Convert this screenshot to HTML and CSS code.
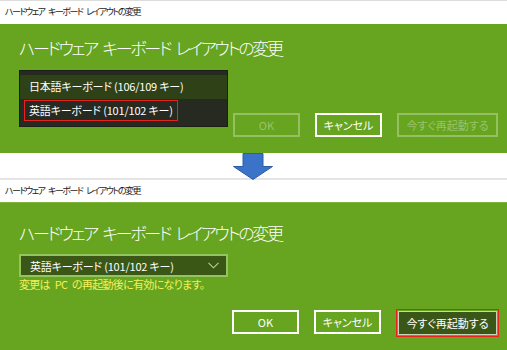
FILE: index.html
```html
<!DOCTYPE html>
<html lang="ja">

<head>
    <meta charset="UTF-8">
    <title>キーボード レイアウトの変更</title>
    <link rel="stylesheet" href="styles.css">
</head>

<body>
    <!-- before: dropdown opened -->
    <div class="titlebar">ハードウェア キーボード レイアウトの変更</div>
    <div class="panel panel--top">
        <h1 class="panel__title">ハードウェア キーボード レイアウトの変更</h1>
        <ul class="list">
            <li class="list__item list__item--hover">日本語キーボード (106/109 キー)</li>
            <li class="list__item"><span class="mark">英語キーボード (101/102 キー)</span></li>
        </ul>
        <div class="actions">
            <button class="btn btn--off">OK</button>
            <button class="btn">キャンセル</button>
            <button class="btn btn--wide btn--off">今すぐ再起動する</button>
        </div>
    </div>

    <div class="arrow-row">
        <svg width="42" height="27" viewBox="0 0 42 27">
            <path d="M11 0.5 H31 V13.5 H40.5 L21 26.5 L1.5 13.5 H11 Z" fill="#3b73c8" stroke="#2d5ea8" stroke-width="1" />
        </svg>
    </div>

    <!-- after: layout chosen -->
    <div class="titlebar titlebar--second">ハードウェア キーボード レイアウトの変更</div>
    <div class="panel panel--bottom">
        <h1 class="panel__title">ハードウェア キーボード レイアウトの変更</h1>
        <div class="select">
            <span>英語キーボード (101/102 キー)</span>
            <svg class="select__chevron" width="11" height="7" viewBox="0 0 11 7">
                <path d="M0.5 0.8 L5.5 5.8 L10.5 0.8" fill="none" stroke="#b9d394" stroke-width="1.1" />
            </svg>
        </div>
        <p class="note">変更は PC の再起動後に有効になります。</p>
        <div class="actions">
            <button class="btn">OK</button>
            <button class="btn">キャンセル</button>
            <span class="mark-box"><button class="btn btn--wide btn--active">今すぐ再起動する</button></span>
        </div>
    </div>
</body>

</html>
```

FILE: styles.css
```css
*,
*::before,
*::after {
    box-sizing: border-box;
}

body {
    margin: 0;
    width: 507px;
    height: 350px;
    overflow: hidden;
    background: #fff;
    font-family: "Noto Sans CJK JP", "Noto Sans", sans-serif;
    font-feature-settings: "palt";
    color: #fff;
}

/* window title */
.titlebar {
    height: 24px;
    padding-left: 5px;
    border-top: 1px solid #dcdcdc;
    background: #fff;
    color: #1a1a1a;
    font-size: 9px;
    line-height: 22px;
    letter-spacing: -1.5px;
    word-spacing: 3px;
}

.titlebar--second {
    height: 23px;
    border-top-color: #e6e6e6;
}

/* green dialog */
.panel {
    position: relative;
    display: flex;
    flex-direction: column;
    background: #67a41f;
    padding: 0 9px 0 19px;
}

.panel--top {
    height: 129px;
    padding-top: 12px;
    padding-bottom: 16px;
}

.panel--bottom {
    height: 148px;
    padding-top: 18px;
    padding-bottom: 16px;
    border-top: 1px solid #7cb43c;
}

.panel__title {
    margin: 0;
    font-size: 17px;
    line-height: 24px;
    font-weight: 300;
    letter-spacing: -2.3px;
    word-spacing: 4px;
}

/* opened dropdown */
.list {
    position: absolute;
    left: 19px;
    top: 46px;
    width: 209px;
    height: 57px;
    margin: 0;
    padding: 4px 0 0;
    list-style: none;
    background: #262a21;
    border: 1px solid #1c1f18;
    font-size: 11px;
    letter-spacing: -0.2px;
}

.list__item {
    height: 24px;
    padding-left: 9px;
    line-height: 23px;
}

.list__item--hover {
    background: #2f4217;
}

.mark {
    display: inline-block;
    margin-left: -5px;
    padding: 0 4px;
    line-height: 19px;
    border: 1px solid #e8221c;
}

/* buttons */
.actions {
    display: flex;
    align-items: flex-start;
    justify-content: flex-end;
    gap: 15px;
    margin-top: auto;
}

.btn {
    width: 67px;
    height: 24px;
    padding: 0;
    border: 2px solid #fff;
    background: transparent;
    color: #fff;
    font-family: inherit;
    font-feature-settings: "palt";
    font-size: 11px;
}

.btn--wide {
    width: 101px;
}

.btn--off {
    border-color: rgba(255, 255, 255, 0.3);
    color: rgba(255, 255, 255, 0.35);
}

.mark-box {
    display: block;
    margin: -1px -1px -3px 0;
    padding: 1px;
    border: 1px solid #e8221c;
}

.btn--active {
    display: block;
    width: 99px;
    border: 1px solid #c8d6b8;
    background: #3a5718;
}

/* closed dropdown */
.select {
    display: flex;
    align-items: center;
    justify-content: space-between;
    width: 209px;
    height: 23px;
    margin-top: 9px;
    padding: 0 7px 0 9px;
    background: #3a5716;
    border: 2px solid #94c45f;
    font-size: 11px;
    letter-spacing: -0.2px;
}

.note {
    margin: 1px 0 0;
    color: #f3f05a;
    font-size: 11px;
    line-height: 13px;
    letter-spacing: -0.7px;
    word-spacing: 3px;
}

/* arrow between the two states */
.arrow-row {
    display: flex;
    justify-content: center;
    height: 26px;
    padding-right: 1px;
    border-bottom: 1px solid #e3e3e3;
}
```
